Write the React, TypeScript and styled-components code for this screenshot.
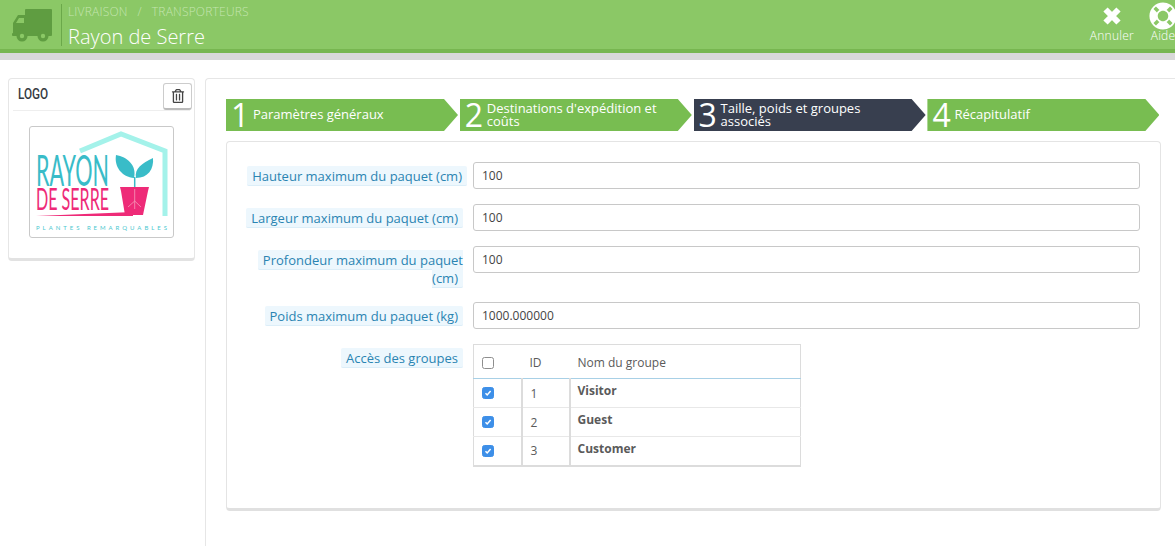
import React from "react";
import styled, { createGlobalStyle } from "styled-components";
import { FaLifeRing, FaRegTrashAlt } from "react-icons/fa";

const Global = createGlobalStyle`
  html, body { margin: 0; padding: 0; background: #fff; overflow: hidden; }
  body { font-family: "Open Sans", "Liberation Sans", sans-serif; font-size: 12px; color: #555; }
  * { box-sizing: border-box; }
`;

const Page = styled.div`
  width: 1175px;
  height: 546px;
  overflow: hidden;
  display: flex;
  flex-direction: column;
`;

const Header = styled.header`
  height: 60px;
  flex: none;
  background: #8bc866;
  border-bottom: 7px solid #d8d8d8;
  display: flex;
`;

const HeaderInner = styled.div`
  flex: 1;
  height: 53px;
  border-bottom: 4px solid #77b650;
  display: flex;
  align-items: flex-start;
  justify-content: space-between;
  overflow: hidden;
`;

const Brand = styled.div`
  display: flex;
  align-items: flex-start;
  padding: 4px 0 0 12px;
`;

const TruckBox = styled.div`
  width: 49px;
  height: 42px;
  display: flex;
  align-items: center;
  svg { display: block; }
`;

const Titles = styled.div`
  border-left: 1px solid #6ba84a;
  height: 42px;
  padding-left: 6px;
`;

const Crumbs = styled.div`
  font-size: 12px;
  line-height: 14px;
  margin-top: 1px;
  color: #c4e5b0;
  text-transform: uppercase;
  font-weight: 300;
  letter-spacing: 0.2px;
  white-space: pre;
`;

const Title = styled.div`
  font-size: 20px;
  font-weight: 300;
  line-height: 26px;
  margin-top: 5px;
  color: #fff;
`;

const Toolbar = styled.div`
  display: flex;
  gap: 15px;
  margin-right: -2px;
  padding-top: 2px;
`;

const ToolButton = styled.div`
  display: flex;
  flex-direction: column;
  align-items: center;
  color: #fff;
  font-size: 12px;
  font-weight: 300;
  letter-spacing: 0.25px;
  line-height: 14px;
`;

const ToolIcon = styled.div`
  height: 27px;
  display: flex;
  align-items: center;
  justify-content: center;
  svg { display: block; }
`;

const Main = styled.div`
  flex: 1;
  display: flex;
  padding: 18px 0 0 8px;
  gap: 10px;
`;

const Sidebar = styled.aside`
  width: 187px;
  height: 183px;
  flex: none;
  background: #fff;
  border: 1px solid #e6e6e6;
  border-bottom: 3px solid #e2e2e2;
  border-radius: 4px;
  padding: 2px 4px 0;
`;

const SideHead = styled.div`
  display: flex;
  align-items: center;
  justify-content: space-between;
  height: 30px;
  border-bottom: 1px solid #eee;
  padding-left: 5px;
`;

const SideTitle = styled.span`
  font-family: "Roboto", "Open Sans", sans-serif;
  font-size: 14px;
  line-height: 18px;
  font-weight: 500;
  margin-top: -3px;
  color: #363a41;
  display: inline-block;
  transform: scaleX(0.84);
  transform-origin: left;
`;

const TrashButton = styled.button`
  width: 29px;
  height: 27px;
  margin: 1px -2px 0 0;
  background: #fff;
  border: 1px solid #ccc;
  border-bottom: 2px solid #bbb;
  border-radius: 3px;
  padding: 0;
  color: #444;
  display: flex;
  align-items: center;
  justify-content: center;
`;

const LogoFrame = styled.div`
  width: 145px;
  height: 112px;
  margin: 15px 0 0 16px;
  border: 1px solid #c9c9c9;
  border-radius: 3px;
  background: #fff;
  svg { display: block; }
`;

const Content = styled.section`
  flex: 1;
  border-left: 1px solid #e6e6e6;
  border-top: 1px solid #e6e6e6;
  border-top-left-radius: 4px;
  padding: 20px 14px 0 20px;
  min-width: 0;
`;

const Steps = styled.div`
  display: grid;
  width: 933.4px;
  grid-template-columns: repeat(4, 1fr);
  column-gap: 1.8px;
  height: 32px;
`;

const Step = styled.div<{ $active?: boolean }>`
  background: ${(p) => (p.$active ? "#383f4f" : "#78bd51")};
  color: #fff;
  height: 32px;
  clip-path: polygon(0 0, calc(100% - 14px) 0, 100% 50%, calc(100% - 14px) 100%, 0 100%);
  display: flex;
  align-items: center;
  padding-left: 5px;
`;

const StepNumber = styled.span`
  font-size: 32px;
  font-weight: 400;
  line-height: 32px;
  width: 22px;
  flex: none;
`;

const StepText = styled.span`
  font-size: 13px;
  font-weight: 500;
  line-height: 13px;
  padding-right: 28px;
  margin-top: -1px;
`;

const Card = styled.div`
  width: 935px;
  height: 370px;
  margin-top: 10px;
  border: 1px solid #e4e4e4;
  border-bottom: 3px solid #e0e0e0;
  border-radius: 4px;
  padding: 20px 20px 0 0;
  display: flex;
  flex-direction: column;
`;

const Row = styled.div<{ $gap: number }>`
  display: grid;
  grid-template-columns: 236px 1fr;
  column-gap: 10px;
  margin-bottom: ${(p) => p.$gap}px;
`;

const LabelCell = styled.div<{ $top?: number }>`
  text-align: right;
  padding-top: ${(p) => p.$top ?? 5}px;
  font-size: 13px;
  line-height: 18px;
`;

const Hint = styled.span<{ $overhang?: number }>`
  background: #edf7fd;
  color: #2a84b2;
  border-bottom: 1px solid #dceef8;
  padding: 1px 5px 0;
  border-radius: 2px;
  margin-right: ${(p) => -(p.$overhang ?? 0)}px;
`;

const TextInput = styled.input`
  width: 100%;
  height: 27px;
  border: 1px solid #c8c8c8;
  border-radius: 3px;
  padding: 0 8px;
  font-family: inherit;
  font-size: 12px;
  color: #444;
  background: #fff;
  outline: none;
`;

const GroupTable = styled.table`
  width: 328px;
  border-collapse: collapse;
  border: 1px solid #dcdcdc;
  border-width: 1px 1px 2px 1px;
  font-size: 12px;
  color: #5a5a5a;
  margin-top: -1px;
`;

const HeadCell = styled.th`
  height: 34px;
  text-align: left;
  font-weight: 400;
  padding: 2px 8px 0;
  border-bottom: 1px solid #a8d0e6;
`;

const BodyCell = styled.td<{ $bold?: boolean }>`
  height: 29px;
  padding: ${(p) => (p.$bold ? "0 8px 5px 7px" : "0 8px")};
  font-weight: ${(p) => (p.$bold ? 700 : 400)};
  border-bottom: 1px solid #e8e8e8;
  border-right: 2px solid #dcdcdc;
  vertical-align: middle;
  &:last-child { border-right: 0; }
`;

const Check = styled.span<{ $on?: boolean }>`
  display: block;
  width: 12px;
  height: 12px;
  border-radius: 2.5px;
  background: ${(p) => (p.$on ? "#3d8fe8" : "#fff")};
  border: 1px solid ${(p) => (p.$on ? "#3d8fe8" : "#8e8e8e")};
  position: relative;
  svg { display: block; position: absolute; left: 1px; top: 1px; }
`;

const Truck = () => (
  <svg width="40" height="33" viewBox="0 0 40 33">
    <rect x="13" y="0" width="27" height="26" rx="1" fill="#5f9d41" />
    <path d="M14 6 L6 6 L1 14 L1 26 L14 26 Z" fill="#5f9d41" />
    <path d="M12 9 L7 9 L4 14 L12 14 Z" fill="#8bc866" />
    <rect x="0" y="24" width="40" height="3" rx="1" fill="#5f9d41" />
    <circle cx="10" cy="27" r="5.5" fill="#5f9d41" />
    <circle cx="31" cy="27" r="5.5" fill="#5f9d41" />
    <circle cx="10" cy="27" r="2.2" fill="#8bc866" />
    <circle cx="31" cy="27" r="2.2" fill="#8bc866" />
  </svg>
);

const CloseIcon = () => (
  <svg width="20" height="20" viewBox="0 0 20 20">
    <path d="M3.5 3.5 L16.5 16.5 M16.5 3.5 L3.5 16.5" fill="none" stroke="#fff" strokeWidth="6" />
  </svg>
);

const Logo = () => (
  <svg width="143" height="110" viewBox="0 0 143 110">
    <path d="M50 24 L91 7 L135 24 L135 89" fill="none" stroke="#a4f2ea" strokeWidth="5" />
    <text transform="translate(6 59) scale(1 2.15)" fill="#39bcc8" fontSize="20" fontFamily="Lato, sans-serif" fontWeight="400" textLength="73" lengthAdjust="spacingAndGlyphs">RAYON</text>
    <text transform="translate(6 83) scale(1 2.2)" fill="#ee2b78" fontSize="14" fontFamily="Lato, sans-serif" fontWeight="400" textLength="73" lengthAdjust="spacingAndGlyphs">DE SERRE</text>
    <path d="M6 89 L103 85 L103 89 Z" fill="#ee2b78" />
    <text x="6" y="103" fill="#4cc8cf" fontSize="6" fontFamily="Lato, sans-serif" textLength="131" lengthAdjust="spacing">PLANTES REMARQUABLES</text>
    <path d="M90 60 L119 60 L118 64 L113 88 L95 88 L91 64 Z" fill="#ee2b78" />
    <path d="M104.7 60 L104.7 50" stroke="#39bcc8" strokeWidth="1.5" fill="none" />
    <path d="M104 51 C92 50 84 40 86 28 C97 30 107 38 104 51 Z" fill="#39bcc8" />
    <path d="M106 51 C104 42 112 36 123 31 C124 42 118 51 106 51 Z" fill="#39bcc8" />
    <path d="M104.7 62 L104.7 82 M104.7 74 L98 80 M104.7 74 L111 80" stroke="#f59ab9" strokeWidth="0.8" fill="none" />
  </svg>
);

const CheckBox = ({ on }: { on?: boolean }) => (
  <Check $on={on}>
    {on && (
      <svg width="8" height="8" viewBox="0 0 8 8">
        <path d="M1.5 4.2 L3.2 6 L6.6 2" fill="none" stroke="#fff" strokeWidth="1.5" />
      </svg>
    )}
  </Check>
);

const steps = [
  { n: "1", t: "Paramètres généraux" },
  { n: "2", t: "Destinations d'expédition et coûts" },
  { n: "3", t: "Taille, poids et groupes associés", active: true },
  { n: "4", t: "Récapitulatif" },
];

const groups = [
  { id: 1, name: "Visitor" },
  { id: 2, name: "Guest" },
  { id: 3, name: "Customer" },
];

export default function App() {
  return (
    <Page>
      <Global />
      <Header>
        <HeaderInner>
          <Brand>
            <TruckBox>
              <Truck />
            </TruckBox>
            <Titles>
              <Crumbs>{"Livraison   /   Transporteurs"}</Crumbs>
              <Title>Rayon de Serre</Title>
            </Titles>
          </Brand>
          <Toolbar>
            <ToolButton>
              <ToolIcon><CloseIcon /></ToolIcon>
              Annuler
            </ToolButton>
            <ToolButton>
              <ToolIcon><FaLifeRing size={28} /></ToolIcon>
              Aide
            </ToolButton>
          </Toolbar>
        </HeaderInner>
      </Header>
      <Main>
        <Sidebar>
          <SideHead>
            <SideTitle>LOGO</SideTitle>
            <TrashButton>
              <FaRegTrashAlt size={14} />
            </TrashButton>
          </SideHead>
          <LogoFrame>
            <Logo />
          </LogoFrame>
        </Sidebar>
        <Content>
          <Steps>
            {steps.map((s) => (
              <Step key={s.n} $active={s.active}>
                <StepNumber>{s.n}</StepNumber>
                <StepText>{s.t}</StepText>
              </Step>
            ))}
          </Steps>
          <Card>
            <Row $gap={15}>
              <LabelCell><Hint $overhang={4}>Hauteur maximum du paquet (cm)</Hint></LabelCell>
              <TextInput readOnly value="100" />
            </Row>
            <Row $gap={15}>
              <LabelCell><Hint>Largeur maximum du paquet (cm)</Hint></LabelCell>
              <TextInput readOnly value="100" />
            </Row>
            <Row $gap={15}>
              <LabelCell><Hint>Profondeur maximum du paquet (cm)</Hint></LabelCell>
              <TextInput readOnly value="100" />
            </Row>
            <Row $gap={16}>
              <LabelCell><Hint>Poids maximum du paquet (kg)</Hint></LabelCell>
              <TextInput readOnly value="1000.000000" />
            </Row>
            <Row $gap={0}>
              <LabelCell $top={4}><Hint>Accès des groupes</Hint></LabelCell>
              <GroupTable>
                <colgroup>
                  <col width={48} />
                  <col width={48} />
                  <col />
                </colgroup>
                <thead>
                  <tr>
                    <HeadCell><CheckBox /></HeadCell>
                    <HeadCell>ID</HeadCell>
                    <HeadCell>Nom du groupe</HeadCell>
                  </tr>
                </thead>
                <tbody>
                  {groups.map((g) => (
                    <tr key={g.id}>
                      <BodyCell><CheckBox on /></BodyCell>
                      <BodyCell>{g.id}</BodyCell>
                      <BodyCell $bold>{g.name}</BodyCell>
                    </tr>
                  ))}
                </tbody>
              </GroupTable>
            </Row>
          </Card>
        </Content>
      </Main>
    </Page>
  );
}
